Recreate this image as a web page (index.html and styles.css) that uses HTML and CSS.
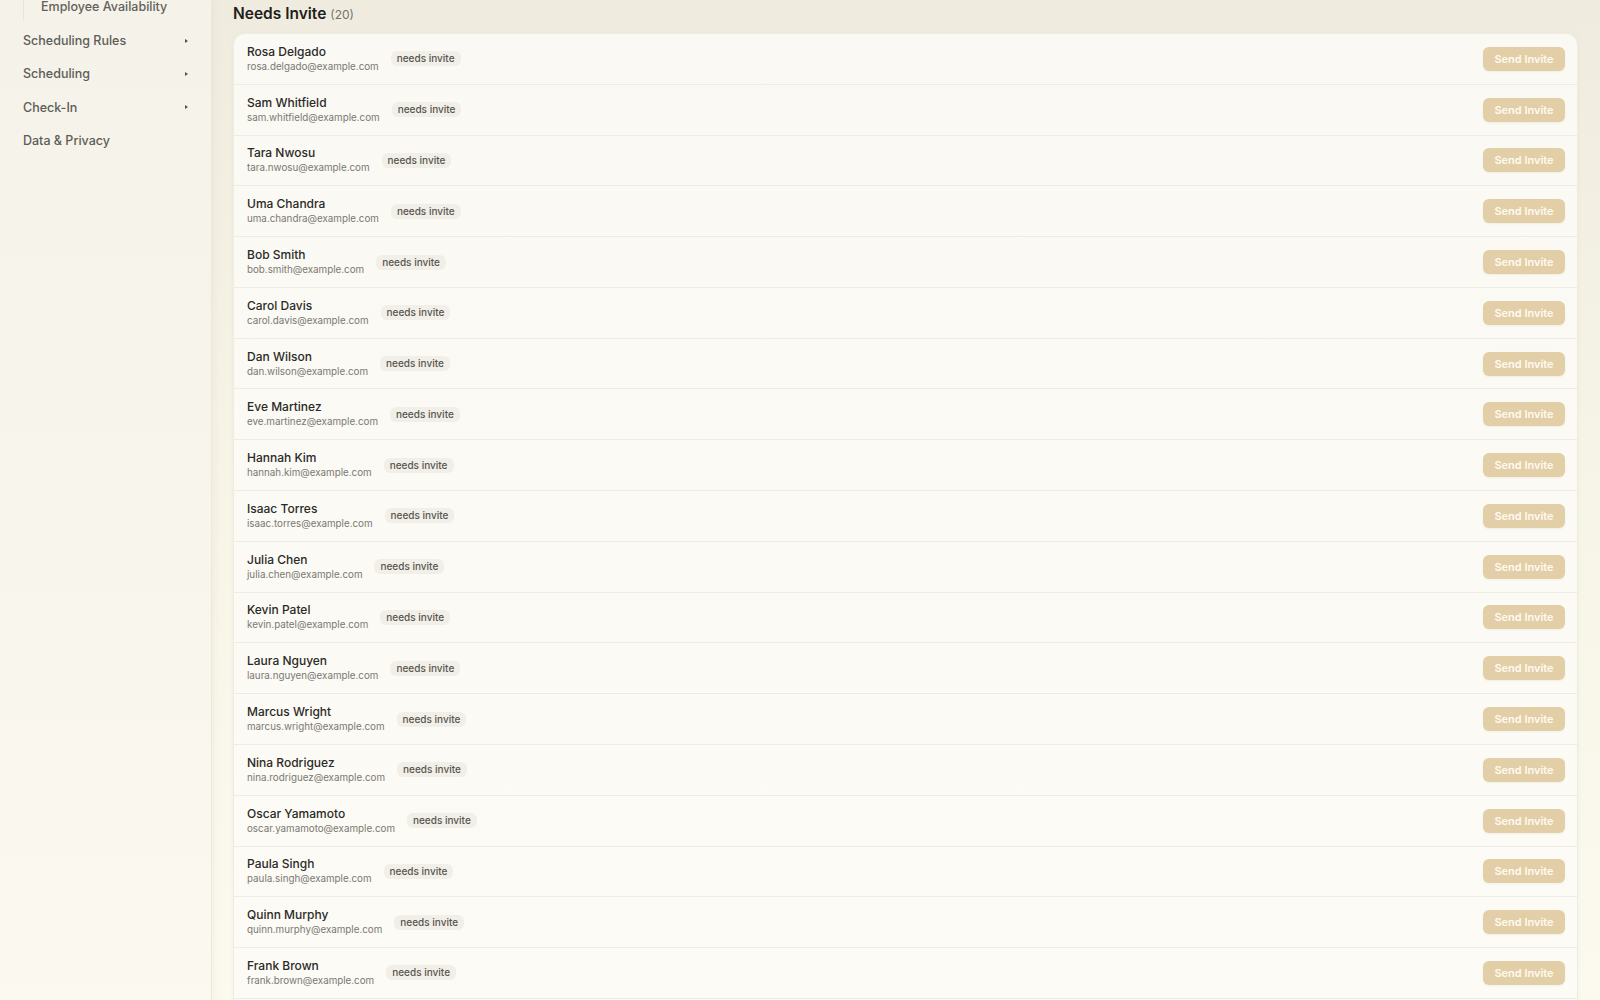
FILE: index.html
```html
<!DOCTYPE html>
<html lang="en">
<head>
    <meta charset="UTF-8">
    <meta name="viewport" content="width=device-width, initial-scale=1.0">
    <title>Needs Invite</title>
    <link rel="stylesheet" href="styles.css">
</head>
<body>
    <div class="layout">
        <aside class="sidebar">
            <ul class="sub-nav">
                <li>Employee Availability</li>
            </ul>
            <ul class="nav">
                <li><span>Scheduling Rules</span><span class="caret"></span></li>
                <li><span>Scheduling</span><span class="caret"></span></li>
                <li><span>Check-In</span><span class="caret"></span></li>
                <li><span>Data &amp; Privacy</span></li>
            </ul>
        </aside>

        <main class="main">
            <h2 class="section-title">Needs Invite <span class="count">(20)</span></h2>
            <div class="card">
                <div class="row">
                    <div class="person"><div class="name">Rosa Delgado</div><div class="email">rosa.delgado@example.com</div></div>
                    <span class="badge">needs invite</span>
                    <button class="invite-btn" disabled>Send Invite</button>
                </div>
                <div class="row">
                    <div class="person"><div class="name">Sam Whitfield</div><div class="email">sam.whitfield@example.com</div></div>
                    <span class="badge">needs invite</span>
                    <button class="invite-btn" disabled>Send Invite</button>
                </div>
                <div class="row">
                    <div class="person"><div class="name">Tara Nwosu</div><div class="email">tara.nwosu@example.com</div></div>
                    <span class="badge">needs invite</span>
                    <button class="invite-btn" disabled>Send Invite</button>
                </div>
                <div class="row">
                    <div class="person"><div class="name">Uma Chandra</div><div class="email">uma.chandra@example.com</div></div>
                    <span class="badge">needs invite</span>
                    <button class="invite-btn" disabled>Send Invite</button>
                </div>
                <div class="row">
                    <div class="person"><div class="name">Bob Smith</div><div class="email">bob.smith@example.com</div></div>
                    <span class="badge">needs invite</span>
                    <button class="invite-btn" disabled>Send Invite</button>
                </div>
                <div class="row">
                    <div class="person"><div class="name">Carol Davis</div><div class="email">carol.davis@example.com</div></div>
                    <span class="badge">needs invite</span>
                    <button class="invite-btn" disabled>Send Invite</button>
                </div>
                <div class="row">
                    <div class="person"><div class="name">Dan Wilson</div><div class="email">dan.wilson@example.com</div></div>
                    <span class="badge">needs invite</span>
                    <button class="invite-btn" disabled>Send Invite</button>
                </div>
                <div class="row">
                    <div class="person"><div class="name">Eve Martinez</div><div class="email">eve.martinez@example.com</div></div>
                    <span class="badge">needs invite</span>
                    <button class="invite-btn" disabled>Send Invite</button>
                </div>
                <div class="row">
                    <div class="person"><div class="name">Hannah Kim</div><div class="email">hannah.kim@example.com</div></div>
                    <span class="badge">needs invite</span>
                    <button class="invite-btn" disabled>Send Invite</button>
                </div>
                <div class="row">
                    <div class="person"><div class="name">Isaac Torres</div><div class="email">isaac.torres@example.com</div></div>
                    <span class="badge">needs invite</span>
                    <button class="invite-btn" disabled>Send Invite</button>
                </div>
                <div class="row">
                    <div class="person"><div class="name">Julia Chen</div><div class="email">julia.chen@example.com</div></div>
                    <span class="badge">needs invite</span>
                    <button class="invite-btn" disabled>Send Invite</button>
                </div>
                <div class="row">
                    <div class="person"><div class="name">Kevin Patel</div><div class="email">kevin.patel@example.com</div></div>
                    <span class="badge">needs invite</span>
                    <button class="invite-btn" disabled>Send Invite</button>
                </div>
                <div class="row">
                    <div class="person"><div class="name">Laura Nguyen</div><div class="email">laura.nguyen@example.com</div></div>
                    <span class="badge">needs invite</span>
                    <button class="invite-btn" disabled>Send Invite</button>
                </div>
                <div class="row">
                    <div class="person"><div class="name">Marcus Wright</div><div class="email">marcus.wright@example.com</div></div>
                    <span class="badge">needs invite</span>
                    <button class="invite-btn" disabled>Send Invite</button>
                </div>
                <div class="row">
                    <div class="person"><div class="name">Nina Rodriguez</div><div class="email">nina.rodriguez@example.com</div></div>
                    <span class="badge">needs invite</span>
                    <button class="invite-btn" disabled>Send Invite</button>
                </div>
                <div class="row">
                    <div class="person"><div class="name">Oscar Yamamoto</div><div class="email">oscar.yamamoto@example.com</div></div>
                    <span class="badge">needs invite</span>
                    <button class="invite-btn" disabled>Send Invite</button>
                </div>
                <div class="row">
                    <div class="person"><div class="name">Paula Singh</div><div class="email">paula.singh@example.com</div></div>
                    <span class="badge">needs invite</span>
                    <button class="invite-btn" disabled>Send Invite</button>
                </div>
                <div class="row">
                    <div class="person"><div class="name">Quinn Murphy</div><div class="email">quinn.murphy@example.com</div></div>
                    <span class="badge">needs invite</span>
                    <button class="invite-btn" disabled>Send Invite</button>
                </div>
                <div class="row">
                    <div class="person"><div class="name">Frank Brown</div><div class="email">frank.brown@example.com</div></div>
                    <span class="badge">needs invite</span>
                    <button class="invite-btn" disabled>Send Invite</button>
                </div>
                <div class="row">
                    <div class="person"><div class="name">Grace Lee</div><div class="email">grace.lee@example.com</div></div>
                    <span class="badge">needs invite</span>
                    <button class="invite-btn" disabled>Send Invite</button>
                </div>
            </div>
        </main>
    </div>
</body>
</html>
```

FILE: styles.css
```css
html, body {
    margin: 0;
    padding: 0;
}

body {
    font-family: 'Inter', 'Noto Sans', sans-serif;
    color: #2b2a27;
    background: linear-gradient(180deg, #efecdf 0%, #f7f4e8 50%, #fcf9ee 100%);
    height: 1000px;
    overflow: hidden;
}

.layout {
    display: flex;
    min-height: 1000px;
}

/* sidebar */
.sidebar {
    width: 212px;
    flex-shrink: 0;
    box-sizing: border-box;
    background: linear-gradient(180deg, #f4f2e9 0%, #f8f6ec 50%, #fcfaf0 100%);
    border-right: 1px solid #ece8da;
    box-shadow: 2px 0 8px rgba(120, 100, 60, 0.05);
}

.sub-nav {
    list-style: none;
    margin: 0 0 4px 23px;
    padding: 0 0 6px 17px;
    border-left: 1px solid #e8e5db;
}

.sub-nav li {
    font-size: 12.5px;
    line-height: 14px;
    font-weight: 500;
    color: #63615c;
}

.nav {
    list-style: none;
    margin: 0;
    padding: 0 23px;
}

.nav li {
    display: flex;
    align-items: center;
    justify-content: space-between;
    height: 33.3px;
    font-size: 12.5px;
    font-weight: 500;
    color: #5d5c58;
}

.caret {
    width: 0;
    height: 0;
    margin-right: 0;
    border-top: 2px solid transparent;
    border-bottom: 2px solid transparent;
    border-left: 3px solid #55534e;
}

/* main column */
.main {
    flex: 1;
    padding: 3px 22px 0 21px;
}

.section-title {
    margin: 0 0 8px;
    font-size: 15.5px;
    line-height: 21px;
    font-weight: 600;
    color: #1f1e1b;
}

.count {
    font-size: 12px;
    font-weight: 400;
    color: #75736d;
}

.card {
    background: linear-gradient(180deg, #faf9f3 0%, #fcfbf5 100%);
    border: 1px solid #efece2;
    border-radius: 12px;
    box-shadow: 0 1px 4px rgba(120, 100, 60, 0.06);
    overflow: hidden;
}

.row {
    display: flex;
    align-items: center;
    gap: 12px;
    padding: 9.9px 12px 9.9px 13px;
    border-bottom: 1px solid #efece3;
}

.person {
    display: flex;
    flex-direction: column;
}

.name {
    font-size: 12px;
    line-height: 16px;
    font-weight: 500;
    color: #2b2a27;
}

.email {
    font-size: 9.8px;
    line-height: 14px;
    color: #7a7872;
}

.badge {
    background-color: #f1efe8;
    color: #57554f;
    font-size: 10px;
    font-weight: 500;
    line-height: 15px;
    padding: 0 6px;
    border-radius: 6px;
}

.invite-btn {
    margin-left: auto;
    width: 82px;
    height: 24px;
    border: none;
    border-radius: 6px;
    background-color: #e3cfa7;
    color: #fffaf0;
    font-family: inherit;
    font-size: 11px;
    font-weight: 600;
    box-shadow: 0 1px 2px rgba(120, 100, 60, 0.08);
}
```
